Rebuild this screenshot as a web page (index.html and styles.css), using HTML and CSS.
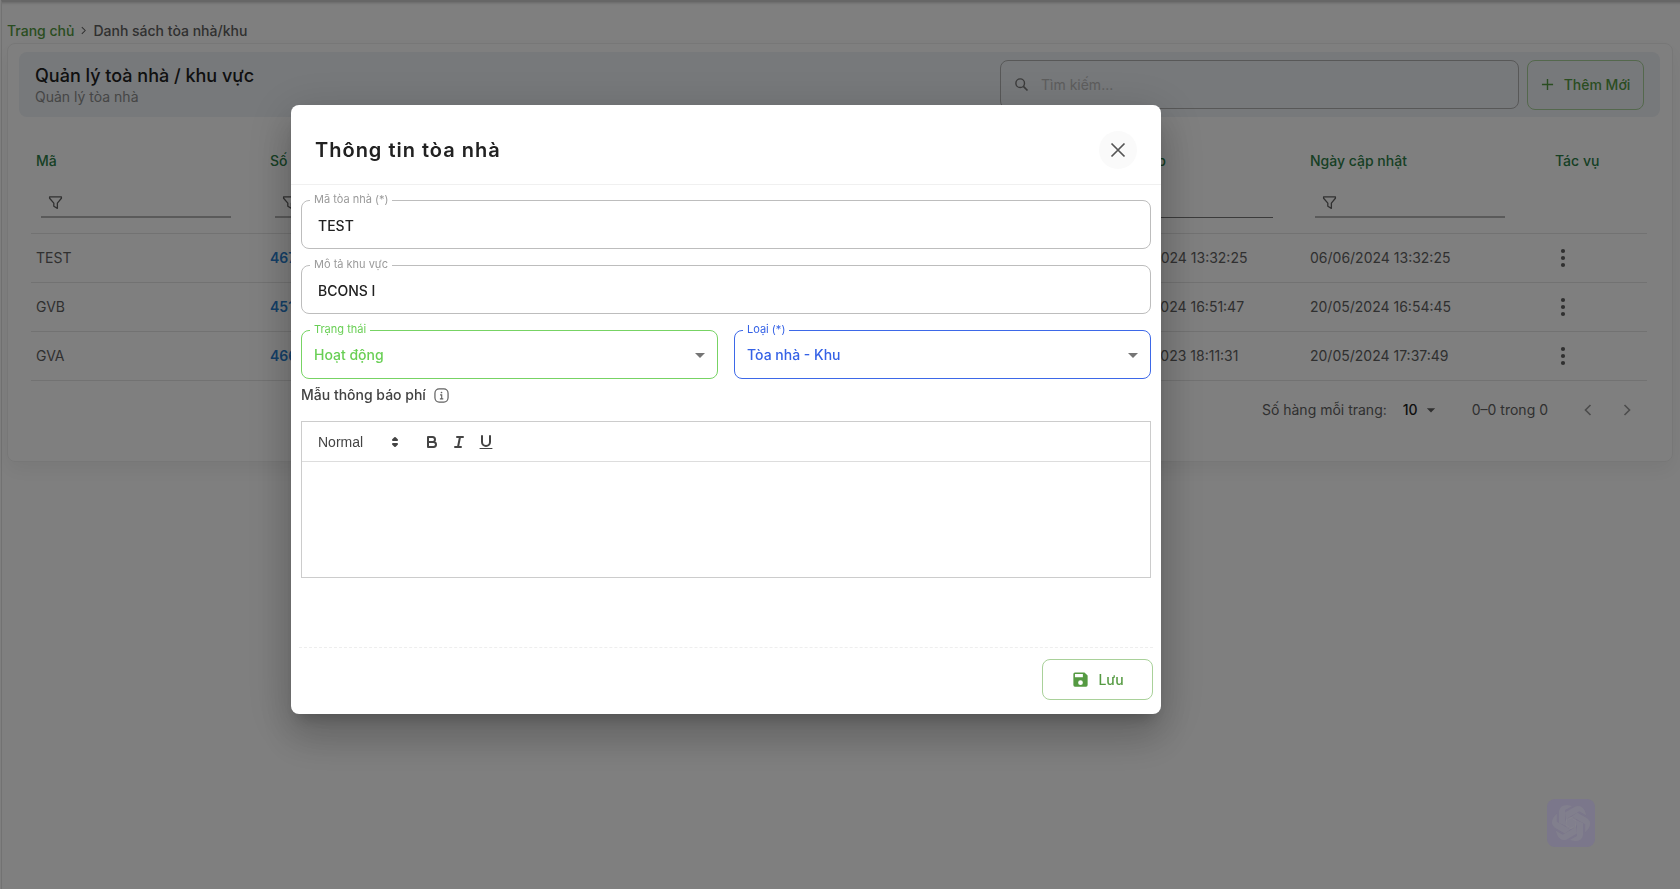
FILE: index.html
```html
<!DOCTYPE html>
<html lang="vi">
<head>
<meta charset="utf-8">
<title>Danh sách tòa nhà/khu</title>
<link rel="stylesheet" href="styles.css">
</head>
<body>
<svg class="sprite" aria-hidden="true">
  <symbol id="i-filter" viewBox="0 0 16 16"><path d="M1.7 2h12.6v1.5L10 8.6v5.6L6.2 12V8.6L1.7 3.5z" fill="none" stroke="currentColor" stroke-width="1.4" stroke-linejoin="round"/></symbol>
  <symbol id="i-dots" viewBox="0 0 24 24"><g fill="currentColor"><circle cx="12" cy="5" r="2.1"/><circle cx="12" cy="12" r="2.1"/><circle cx="12" cy="19" r="2.1"/></g></symbol>
  <symbol id="i-caret" viewBox="0 0 24 24"><path d="M7 10l5 5 5-5z" fill="currentColor"/></symbol>
</svg>

<div class="shell">
  <nav class="crumbs" aria-label="Breadcrumb">
    <a href="#">Trang chủ</a>
    <svg class="crumb-sep" viewBox="0 0 8 8"><path d="M2.5 1l3 3-3 3" fill="none" stroke="currentColor" stroke-width=".9"/></svg>
    <span>Danh sách tòa nhà/khu</span>
  </nav>

  <main class="card">
    <header class="band">
      <div class="band-text">
        <h1>Quản lý toà nhà / khu vực</h1>
        <p>Quản lý tòa nhà</p>
      </div>
      <label class="search">
        <svg viewBox="0 0 16 16"><circle cx="6.6" cy="6.6" r="4.6" fill="none" stroke="currentColor" stroke-width="1.5"/><path d="M10 10l4.4 4.4" stroke="currentColor" stroke-width="1.8"/></svg>
        <input type="search" placeholder="Tìm kiếm..." aria-label="Tìm kiếm">
      </label>
      <button class="btn add" type="button">
        <svg viewBox="0 0 14 14"><path d="M7 1v12M1 7h12" stroke="currentColor" stroke-width="1.5"/></svg>
        Thêm Mới
      </button>
    </header>

    <table class="grid">
      <colgroup><col class="c-code"><col class="c-count"><col><col class="c-created"><col class="c-updated"><col class="c-action"></colgroup>
      <thead>
        <tr>
          <th>Mã<label class="filter"><svg><use href="#i-filter"/></svg><input aria-label="Lọc mã"></label></th>
          <th>Số căn<label class="filter"><svg><use href="#i-filter"/></svg><input aria-label="Lọc số căn"></label></th>
          <th></th>
          <th>Ngày lập<label class="filter thin"><svg><use href="#i-filter"/></svg><input aria-label="Lọc ngày lập"></label></th>
          <th>Ngày cập nhật<label class="filter"><svg><use href="#i-filter"/></svg><input aria-label="Lọc ngày cập nhật"></label></th>
          <th>Tác vụ</th>
        </tr>
      </thead>
      <tbody>
        <tr><td>TEST</td><td><a href="#">467</a></td><td></td><td>06/06/2024 13:32:25</td><td>06/06/2024 13:32:25</td><td><button class="more" type="button" aria-label="Tác vụ"><svg><use href="#i-dots"/></svg></button></td></tr>
        <tr><td>GVB</td><td><a href="#">451</a></td><td></td><td>20/05/2024 16:51:47</td><td>20/05/2024 16:54:45</td><td><button class="more" type="button" aria-label="Tác vụ"><svg><use href="#i-dots"/></svg></button></td></tr>
        <tr><td>GVA</td><td><a href="#">466</a></td><td></td><td>20/05/2023 18:11:31</td><td>20/05/2024 17:37:49</td><td><button class="more" type="button" aria-label="Tác vụ"><svg><use href="#i-dots"/></svg></button></td></tr>
      </tbody>
    </table>

    <footer class="pager">
      <label for="rows">Số hàng mỗi trang:</label>
      <span class="rows"><select id="rows"><option>10</option></select><svg><use href="#i-caret"/></svg></span>
      <span class="range">0–0 trong 0</span>
      <button type="button" aria-label="Trang trước"><svg viewBox="0 0 24 24"><path d="M15 6l-6 6 6 6" fill="none" stroke="currentColor" stroke-width="2"/></svg></button>
      <button type="button" aria-label="Trang sau"><svg viewBox="0 0 24 24"><path d="M9 6l6 6-6 6" fill="none" stroke="currentColor" stroke-width="2"/></svg></button>
    </footer>
  </main>
</div>

<div class="overlay">
  <section class="modal" role="dialog" aria-modal="true" aria-labelledby="modal-title">
    <header class="modal-head">
      <h2 id="modal-title">Thông tin tòa nhà</h2>
      <button class="close" type="button" aria-label="Đóng"><svg viewBox="0 0 16 16"><path d="M1.5 1.5l13 13M14.5 1.5l-13 13" stroke="currentColor" stroke-width="1.7"/></svg></button>
    </header>
    <form class="modal-body">
      <fieldset class="field">
        <legend><label for="code">Mã tòa nhà (*)</label></legend>
        <input id="code" value="TEST">
      </fieldset>
      <fieldset class="field">
        <legend><label for="desc">Mô tả khu vực</label></legend>
        <input id="desc" value="BCONS I">
      </fieldset>
      <div class="pair">
        <fieldset class="field green">
          <legend><label for="status">Trạng thái</label></legend>
          <select id="status"><option>Hoạt động</option></select>
          <svg class="caret"><use href="#i-caret"/></svg>
        </fieldset>
        <fieldset class="field blue">
          <legend><label for="kind">Loại (*)</label></legend>
          <select id="kind"><option>Tòa nhà - Khu</option></select>
          <svg class="caret"><use href="#i-caret"/></svg>
        </fieldset>
      </div>
      <div class="note">
        <label for="editor">Mẫu thông báo phí</label>
        <svg viewBox="0 0 16 16"><rect x="1" y="1" width="14" height="14" rx="4.5" fill="none" stroke="currentColor" stroke-width="1.3"/><path d="M6.5 7.3h1.7v4.2M6.3 11.6h3.6" fill="none" stroke="currentColor" stroke-width="1.2"/><circle cx="8" cy="4.8" r=".9" fill="currentColor"/></svg>
      </div>
      <div class="editor">
        <div class="toolbar">
          <span class="format">
            <select aria-label="Kiểu đoạn"><option>Normal</option></select>
            <svg viewBox="0 0 18 18"><g fill="currentColor" stroke="currentColor" stroke-width="2" stroke-linejoin="round"><path d="M7 11l2 2 2-2zM7 7l2-2 2 2z"/></g></svg>
          </span>
          <button type="button" aria-label="Đậm"><svg viewBox="0 0 18 18"><path d="M5 4h4.5a2.5 2.5 0 0 1 0 5H5zM5 9h5.5a2.5 2.5 0 0 1 0 5H5z"/></svg></button>
          <button type="button" aria-label="Nghiêng"><svg viewBox="0 0 18 18"><path d="M7 4h6M5 14h6M8 14l2-10"/></svg></button>
          <button type="button" aria-label="Gạch chân"><svg viewBox="0 0 18 18"><path d="M5 3v6a4 4 0 0 0 8 0V3"/><path d="M3 15.5h12" stroke-width="1"/></svg></button>
        </div>
        <textarea id="editor"></textarea>
      </div>
      <div class="modal-foot">
        <button class="btn save" type="button">
          <svg viewBox="0 0 24 24"><path d="M17 3H5a2 2 0 0 0-2 2v14a2 2 0 0 0 2 2h14a2 2 0 0 0 2-2V7zm-5 16a3 3 0 1 1 0-6 3 3 0 0 1 0 6zm3-10H5V5h10z" fill="currentColor"/></svg>
          Lưu
        </button>
      </div>
    </form>
  </section>
</div>

<button class="assistant" type="button" aria-label="Trợ lý">
  <svg viewBox="-24 -24 48 48">
    <g fill="currentColor" fill-opacity=".4">
      <path id="petal" d="M-12 0V-12Q-11-18-4-18L1-17-6-13V1L0 5z"/>
      <use href="#petal" transform="rotate(60)"/><use href="#petal" transform="rotate(120)"/><use href="#petal" transform="rotate(180)"/><use href="#petal" transform="rotate(240)"/><use href="#petal" transform="rotate(300)"/>
      <circle r="6"/>
    </g>
  </svg>
</button>
</body>
</html>
```
FILE: styles.css
```css
* { box-sizing: border-box; }
body {
  margin: 0;
  min-height: 100vh;
  background: #fff;
  color: #616161;
  font: 14px/20px Inter, "Noto Sans", sans-serif;
}
button, input, select, textarea { font: inherit; color: inherit; background: none; border: 0; margin: 0; padding: 0; outline: 0; }
select { appearance: none; }
svg { display: block; flex: none; }
a { text-decoration: none; }
.sprite { position: absolute; width: 0; height: 0; }

.shell {
  min-height: 100vh;
  margin-left: 1px;
  padding: 17px 7px 0 5px;
  border-top: 2px solid #ccc;
  border-left: 1px solid #e4e4e4;
  box-shadow: inset 0 4px 3px -3px #ccc;
}
.crumbs { display: flex; align-items: center; height: 24px; padding-bottom: 1px; font-weight: 500; }
.crumbs a { color: #559a42; }
.crumb-sep { width: 9px; height: 9px; margin: 0 5px; }

.card {
  padding: 8px 12px 31px 11px;
  border: 1px solid #eee;
  border-radius: 8px;
  box-shadow: 0 8px 20px rgba(0, 0, 0, .06);
}
.band {
  display: flex;
  align-items: center;
  height: 65px;
  padding: 0 16px;
  border-radius: 8px;
  background: #eef2f6;
}
.band-text { flex: 1; padding-top: 2px; }
.band h1 { margin: 0; color: #212121; font-size: 18px; line-height: 22px; font-weight: 500; }
.band p { margin: 0; color: #8c8c8c; line-height: 20px; }
.search {
  display: flex;
  align-items: center;
  gap: 12px;
  width: 519px;
  height: 49px;
  padding: 0 13px;
  border: 1px solid #b0b0b0;
  border-radius: 8px;
  color: #777;
}
.search svg { width: 15px; height: 15px; }
.search input { flex: 1; min-width: 0; }
.search input::placeholder { color: #bbb; opacity: 1; }
.btn {
  display: flex;
  align-items: center;
  justify-content: center;
  border: 1px solid #a9d19a;
  border-radius: 8px;
  color: #559a42;
  font-weight: 500;
}
.add { width: 117px; height: 50px; margin-left: 8px; gap: 10px; }
.add svg { width: 13px; height: 13px; }

.grid { width: calc(100% - 25px); margin: 25px 13px 0 12px; border-collapse: collapse; table-layout: fixed; }
.c-code, .c-count { width: 234px; }
.c-created { width: 203px; }
.c-updated { width: 245px; }
.c-action { width: 97px; }
.grid th, .grid td { padding: 0 5px; text-align: left; border-bottom: 1px solid #e4e4e4; vertical-align: middle; }
.grid th { height: 91px; padding-top: 9px; vertical-align: top; color: #2e8049; font-weight: 500; }
.grid td { height: 49px; }
.grid td a { color: #2a7fd0; font-weight: 600; }
.filter {
  display: flex;
  align-items: center;
  width: 190px;
  height: 29px;
  margin: 18px 0 0 5px;
  padding: 0 7px;
  border-bottom: 2px solid #b4b4b4;
  color: #616161;
}
.filter.thin { width: 161px; border-bottom: 1px solid #777; }
.filter svg { width: 15px; height: 15px; }
.filter input { flex: 1; min-width: 0; }
.more { display: block; color: #616161; margin-left: -4px; }
.more svg { width: 24px; height: 24px; }

.pager { display: flex; align-items: center; height: 40px; margin-top: 9px; padding-right: 23px; }
.pager label { margin-left: auto; }
.rows { display: flex; align-items: center; margin: 0 31px 0 16px; color: #212121; }
.rows select { width: 18px; font-weight: 500; }
.rows svg { width: 22px; height: 22px; color: #616161; }
.pager button { margin-left: 19px; color: #999; }
.range { margin-right: 11px; }
.pager svg { width: 20px; height: 20px; }

.overlay {
  position: fixed;
  inset: 0;
  display: flex;
  align-items: center;
  justify-content: center;
  padding: 0 228px 70px 0;
  background: rgba(0, 0, 0, .5);
}
.modal {
  width: 870px;
  border-radius: 8px;
  background: #fff;
  box-shadow: 0 11px 15px -7px rgba(0, 0, 0, .2), 0 24px 38px 3px rgba(0, 0, 0, .14), 0 9px 46px 8px rgba(0, 0, 0, .12);
}
.modal-head {
  display: flex;
  align-items: center;
  justify-content: space-between;
  height: 80px;
  padding: 11px 24px 0;
  border-bottom: 1px solid #f0f0f0;
}
.modal-head h2 { margin: 0; color: #212121; font-size: 20px; line-height: 28px; font-weight: 600; letter-spacing: 1px; }
.close { display: grid; place-items: center; width: 38px; height: 38px; border-radius: 50%; background: #fafafa; color: #555; }
.close svg { width: 16px; height: 16px; }
.modal-body { display: flex; flex-direction: column; gap: 9px; padding: 8px 10px 14px; }
.field { position: relative; flex: 1; min-width: 0; margin: 0; padding: 0; border: 1px solid #bdbdbd; border-radius: 8px; }
.field legend { margin-left: 8px; padding: 0 4px 2px; color: #9a9a9a; font-size: 11px; line-height: 12px; }
.field legend label { display: block; }
.field input, .field select { display: block; width: 100%; height: 41px; padding: 8px 16px 13px; color: #212121; font-weight: 500; line-height: 20px; }
.pair { display: flex; gap: 16px; }
.field select { padding: 8px 12px 13px; }
.caret { position: absolute; right: 5px; top: 6px; width: 24px; height: 24px; color: #757575; pointer-events: none; }
.green { border-color: #77d364; }
.field.green legend, .field.green select { color: #69cf55; }
.blue { border-color: #3d68e8; }
.field.blue legend, .field.blue select { color: #3562e6; }
.note { display: flex; align-items: center; gap: 8px; height: 20px; margin-top: -3px; color: #424242; font-weight: 500; }
.note svg { width: 15px; height: 15px; color: #616161; }
.editor { margin-top: 7px; border: 1px solid #ccc; }
.toolbar { display: flex; align-items: center; height: 40px; padding: 0 16px; border-bottom: 1px solid #ddd; color: #444; font-family: "Liberation Sans", sans-serif; }
.format { display: flex; align-items: center; width: 88px; margin-right: 17px; }
.format select { width: 68px; font-weight: 500; }
.format svg { width: 18px; height: 18px; }
.toolbar button { width: 27px; height: 24px; }
.toolbar button svg { width: 18px; height: 18px; fill: none; stroke: currentColor; stroke-width: 2; stroke-linecap: round; stroke-linejoin: round; }
.editor textarea { display: block; width: 100%; height: 115px; padding: 12px 15px; resize: none; }
.modal-foot { display: flex; justify-content: flex-end; margin: 60px -2px 0; padding-top: 11px; border-top: 1px dashed #eee; }
.save { width: 111px; height: 41px; gap: 8px; }
.save svg { width: 19px; height: 19px; }

.assistant {
  position: fixed;
  right: 85px;
  bottom: 42px;
  width: 48px;
  height: 48px;
  border-radius: 8px;
  background: #7b778b;
  color: #8b8b90;
}
```
